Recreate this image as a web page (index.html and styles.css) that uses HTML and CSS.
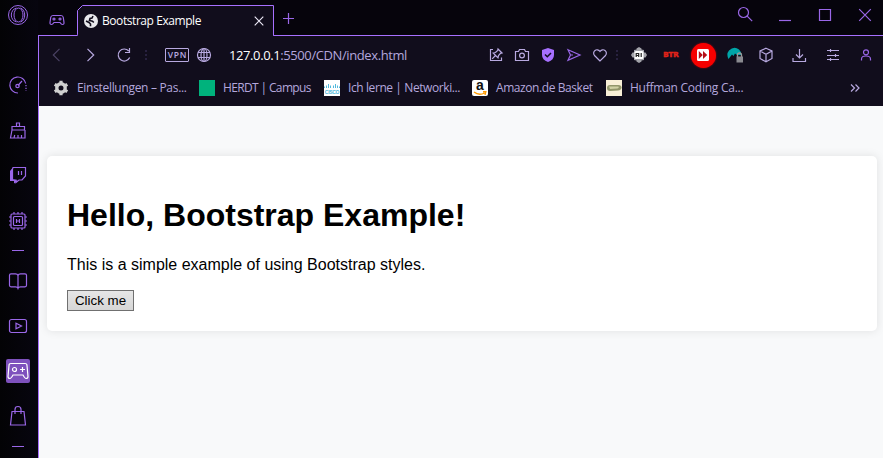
FILE: index.html
```html
<!DOCTYPE html>
<html lang="en">
<head>
<meta charset="utf-8">
<title>Bootstrap Example</title>
<link rel="stylesheet" href="styles.css">
</head>
<body>
<div class="browser">
  <aside class="sidebar">
    <svg class="ic opera" width="22" height="22" viewBox="0 0 22 22"><circle cx="11" cy="11" r="9.500"/><ellipse cx="11.500" cy="11" rx="4.500" ry="7"/><path d="M9.500 4C6 4.800 4.300 8 4.300 11s1.700 6.200 5.200 7M13.500 4c3 1 4.200 4 4.200 7s-1.200 6-4.200 7"/></svg>
    <span></span>
    <svg class="ic" width="20" height="20" viewBox="0 0 20 20"><path d="M10 18a8 8 0 1 1 7.700-9.500M10 10.500l4-4.500"/><circle cx="9.500" cy="11" r="1.700"/><path d="M18 10v6" stroke-dasharray="1.200 1.500"/></svg>
    <svg class="ic" width="20" height="20" viewBox="0 0 20 20"><path d="M8.500 5.500V2h3v3.500M4 5.500h12.500V9H4zM4 9L2.500 17H17V9M6 17l.7-3M10 17v-3M13.500 17v-3"/></svg>
    <svg class="ic" width="20" height="20" viewBox="0 0 20 20"><path d="M5 2.500h12.500v8.500l-3.500 4h-3L8 17.500V15H4.500V4z"/><path class="solid" d="M4.500 3L2 6v10h4v2.500L10 16l-4-1.500H4.500z"/><path d="M10.500 6v4M13.500 6v4"/></svg>
    <svg class="ic" width="20" height="20" viewBox="0 0 20 20"><rect x="3" y="3" width="14" height="14" rx="1"/><rect x="5.500" y="5.500" width="9" height="9" rx="1"/><path d="M8.500 8v4M11.500 8v4M8.500 10h3M6 1v2M10 1v2M14 1v2M6 17v2M10 17v2M14 17v2M1 6h2M1 10h2M1 14h2M17 6h2M17 10h2M17 14h2"/></svg>
    <i class="dash"></i>
    <svg class="ic" width="20" height="20" viewBox="0 0 20 20"><path d="M10 4.500Q9.500 2.800 7.500 2.800H3Q1.500 2.800 1.500 4.300v10q0 1.500 1.500 1.500h4.500q2 0 2.500 1.500.5-1.500 2.500-1.500H17q1.500 0 1.500-1.500v-10q0-1.500-1.500-1.500h-4.500q-2 0-2.500 1.700v12.500"/></svg>
    <svg class="ic" width="20" height="20" viewBox="0 0 20 20"><rect x="1.500" y="3.500" width="17" height="13" rx="2"/><path d="M8 7.200v5.600l5.500-2.800z"/></svg>
    <svg class="ic pad" width="24" height="24" viewBox="0 0 24 24"><path d="M5 4.500h14q2 0 2 2l1 11q0 2-2 2-1 0-3-3.500H7q-2 3.500-3 3.500-2 0-2-2l1-11q0-2 2-2z"/><circle cx="8.500" cy="10.500" r="2"/><path d="M16.500 8v5M14 10.500h5"/></svg>
    <svg class="ic" width="20" height="22" viewBox="0 0 20 22"><path d="M4 6.500h12l1.500 13.500h-15zM7 9V4.500Q7 1.500 10 1.500t3 3V9"/></svg>
    <i class="dash"></i>
  </aside>

  <div class="main">
    <header class="tabs">
      <svg class="ic gx" width="16" height="12" viewBox="0 0 16 12"><path d="M4 1.500h8q2 0 2.300 2l.7 5q.2 2-1.500 2-1.200 0-2.500-2H5q-1.300 2-2.500 2-1.700 0-1.500-2l.7-5q.3-2 2.300-2z"/><circle cx="5" cy="5" r="1"/><circle cx="11" cy="5" r="1"/></svg>
      <div class="tab">
        <svg class="outline" width="198" height="31" viewBox="0 0 198 31"><path d="M0 30.500L.5 29V5.500L5.500.5h191V30.500"/><path class="cover" d="M1 31v-1h195v1z"/></svg>
        <svg class="world" width="14" height="14" viewBox="0 0 14 14"><circle cx="7" cy="7" r="7" fill="#e9e9ed"/><path d="M9 2L8 4 6 4.500 5.500 6.500 8.500 7.200 9.800 8.500M2 7l3 1.500 1.500 1.500V12.300" fill="none" stroke="#110d1c" stroke-width="1.600"/></svg>
        <span class="title">Bootstrap Example</span>
        <svg class="close" width="10" height="10" viewBox="0 0 10 10"><path d="M.7.700l8.600 8.600M9.300.700L.7 9.300"/></svg>
      </div>
      <svg class="ic plus" width="12" height="12" viewBox="0 0 12 12"><path d="M6.500 1v11M1 6.500h11"/></svg>
      <div class="controls">
        <svg class="ic" width="16" height="16" viewBox="0 0 16 16"><circle cx="6.500" cy="6.500" r="5"/><path d="M10.200 10.200l5 5"/></svg>
        <svg class="ic" width="12" height="12" viewBox="0 0 12 12"><path d="M0 11.500h12"/></svg>
        <svg class="ic" width="12" height="12" viewBox="0 0 12 12"><path d="M.5.500h11v11H.5z"/></svg>
        <svg class="ic" width="12" height="12" viewBox="0 0 12 12"><path d="M.2.200l11.600 11.600M11.800.200L.2 11.800"/></svg>
      </div>
    </header>

    <nav class="toolbar">
      <svg class="ic dim" width="14" height="14" viewBox="0 0 14 14"><path d="M10.500 .8L4.300 7l6.200 6.200"/></svg>
      <svg class="ic pale" width="14" height="14" viewBox="0 0 14 14"><path d="M4.500 .8L10.700 7 4.500 13.200"/></svg>
      <svg class="ic pale" width="16" height="16" viewBox="0 0 16 16"><path d="M13.700 10.500a6 6 0 1 1-1-6.500M13.500 1v4.500H9"/></svg>
      <svg class="dots" width="4" height="12" viewBox="0 0 4 12"><path d="M1 1h2v2H1zM1 5h2v2H1zM1 9h2v2H1z"/></svg>
      <span class="vpn">VPN</span>
      <svg class="ic pale" width="16" height="16" viewBox="0 0 16 16"><circle cx="8" cy="8" r="6.500"/><ellipse cx="8" cy="8" rx="3" ry="6.500"/><path d="M8 1.500v13M2 5.500h12M2 10.500h12"/></svg>
      <span class="url"><b>127.0.0.1</b>:5500/CDN/index.html</span>
      <svg class="ic pale" width="14" height="14" viewBox="0 0 14 14"><path d="M4 1.500H1.500v11h11V9.500M9 1l4 4-1.500.3-2 2.200L9 9.800 4.200 5l2.300-.5 2.200-2zM6.500 7.500l-3.300 3.300"/></svg>
      <svg class="ic pale" width="16" height="14" viewBox="0 0 16 14"><path d="M1.500 3.500h3l1-2h5l1 2h3v9h-13z"/><circle cx="8" cy="7.500" r="2.400"/></svg>
      <svg width="14" height="14" viewBox="0 0 14 14"><path fill="#a770ff" d="M7 0l6 2v5q0 5-6 7-6-2-6-7V2z"/><path fill="none" stroke="#110d20" stroke-width="1.500" d="M4 6.500l2.300 2.300L10 5"/></svg>
      <svg class="ic" width="14" height="14" viewBox="0 0 14 14"><path d="M1 1.800L13 7 1 12.200 3.500 7zM3.500 7H6"/></svg>
      <svg class="ic pale" width="16" height="16" viewBox="0 0 16 16"><path d="M8 14L2.500 8.500C-.5 4.500 5 .3 8 4.500c3-4.200 8.500 0 5.500 4z"/></svg>
      <svg class="dots" width="4" height="12" viewBox="0 0 4 12"><path d="M1 1h2v2H1zM1 5h2v2H1zM1 9h2v2H1z"/></svg>
      <svg width="16" height="16" viewBox="0 0 16 16"><path fill="#a3a3aa" d="M5.500 1.500L8 0l2.500 1.500v1L13 3v2.500h1.500L16 8l-1.500 2.500H13V13l-2.500.5v1L8 16l-2.500-1.500v-1L3 13v-2.500H1.500L0 8l1.500-2.500H3V3l2.500-.5z"/><rect x="3.500" y="4" width="9" height="8" rx="1.500" fill="#fff"/><path fill="none" stroke="#222" stroke-width="1.200" d="M5.200 10V6.500h2.500V10M5.200 8.500h2.500M10.200 6v4"/></svg>
      <span class="btr">BTR</span>
      <span class="record"><svg width="12" height="12" viewBox="0 0 12 12"><rect width="12" height="12" rx="1.500" fill="#fff"/><path d="M1.800 2l4 4-4 4zM6 2l4.200 4L6 10z" fill="#b51018"/></svg></span>
      <svg width="16" height="16" viewBox="0 0 16 16"><path fill="#00a5a8" d="M1.500 12Q-1 7 2 3.500 7-1.500 12 2.500q2 1.500 2.300 5.500H10L8 6.500 6.500 9 5 7.500z"/><path d="M10.500 10V8q0-2 2-2t2 2v2" fill="none" stroke="#999" stroke-width="1.300"/><rect x="9.500" y="9.500" width="6.500" height="6" fill="#8a8a90"/></svg>
      <svg class="ic pale" width="16" height="16" viewBox="0 0 16 16"><path d="M8 1.200l6 2.800v7.500l-6 3.300-6-3.300V4zM2 4l6 3.200L14 4M8 7.200v7.500"/></svg>
      <svg class="ic pale" width="14" height="14" viewBox="0 0 14 14"><path d="M7.500 1v9M4 6.500L7.500 10 11 6.500M1 10v3.500h12.500V10"/></svg>
      <svg class="ic pale" width="14" height="12" viewBox="0 0 14 12"><path d="M1 1.500h12M1 6.500h12M1 10.500h12M4.500 0v3M9.500 5v3M4.500 9v3"/></svg>
      <svg class="ic" width="12" height="14" viewBox="0 0 12 14"><circle cx="6" cy="4.300" r="2.500"/><path d="M1.500 12.500V11q0-3 4.500-3t4.500 3v1.500"/></svg>
    </nav>

    <nav class="bookmarks">
      <a class="bm w1"><svg width="16" height="16" viewBox="0 0 16 16"><circle cx="8" cy="8" r="4.200" fill="none" stroke="#d0d0d0" stroke-width="3.400"/><path stroke="#d0d0d0" stroke-width="3.200" d="M8 .8v2.500M8 12.700v2.500M1.700 4.400l2.200 1.300M12.100 10.300l2.200 1.300M1.700 11.600l2.200-1.300M12.100 5.700l2.200-1.300"/></svg><span class="t1">Einstellungen – Pas...</span></a>
      <a class="bm w2"><i class="green"></i><span class="t2">HERDT | Campus</span></a>
      <a class="bm w3"><span class="cisco"><svg width="16" height="6" viewBox="0 0 16 6"><path d="M.5 3.500v1.500M2.500 2.500v2.500M4.500 1v4M6.500 2.500v2.500M9.500 2.500v2.500M11.500 1v4M13.500 2.500v2.500M15.500 3.500v1.500" stroke="#52b9dc"/></svg><b>CISCO</b></span><span class="t3">Ich lerne | Networki...</span></a>
      <a class="bm w4"><span class="amazon"><b>a</b><svg width="14" height="5" viewBox="0 0 14 5"><path d="M1 1q5 4 10.500 1M10 .7h2.800L12 3.800" fill="none" stroke="#ff9900" stroke-width="1.400"/></svg></span><span class="t4">Amazon.de Basket</span></a>
      <a class="bm w5"><svg width="16" height="16" viewBox="0 0 16 16"><rect width="16" height="16" fill="#f8efd6"/><path d="M1 8q0-3 3-3h8.500Q15.500 5 15.500 7.500T12 10.500L4 11Q1 11 1 8z" fill="#92966a"/><path d="M3 6.500h9.500q1 1.500-1 2L4 9z" fill="#d0d1a4"/></svg><span class="t5">Huffman Coding Ca...</span></a>
      <svg class="ic pale more" width="10" height="8" viewBox="0 0 10 8"><path d="M1 .5L4.500 4 1 7.500M5.500.500L9 4 5.500 7.500"/></svg>
    </nav>

    <main class="page">
      <section class="card">
        <h1>Hello, Bootstrap Example!</h1>
        <p>This is a simple example of using Bootstrap styles.</p>
        <button>Click me</button>
      </section>
    </main>
  </div>
</div>
</body>
</html>
```
FILE: styles.css
```css
* { box-sizing: border-box; }
body { margin: 0; overflow: hidden; }
svg { display: block; flex: none; }
.browser {
  display: flex;
  width: 883px;
  height: 458px;
  background: #06040c;
  font-family: "Open Sans", "Noto Sans", sans-serif;
}
.ic { fill: none; stroke: #9a67e8; stroke-width: 1.2; overflow: visible; }
.opera { stroke-width: 1; }
.ic .solid { fill: #9a67e8; stroke: none; }
.pale { stroke: #b8a9e0; }
.dim { stroke: #4a4163; }
.dots { fill: #28213f; }

.sidebar {
  display: grid;
  grid-template-rows: 30px 32px 46px 45px 44px 48px 10px 52px 38px 52px 38px 22px;
  width: 38px;
  padding-right: 2px;
  place-items: center;
  background: linear-gradient(90deg, #030305, #07050f);
}
.dash { width: 12px; height: 1px; background: #9a67e8; }
.pad { background: #7e51bd; border-radius: 2px; stroke: #fff; }

.main { flex: 1; min-width: 0; display: flex; flex-direction: column; }
.tabs {
  display: flex;
  height: 36px;
  padding-top: 5px;
  background: linear-gradient(#a770ff, #a770ff) bottom / 100% 1px no-repeat;
}
.gx { margin: 9px 9px 0 11px; }
.tab {
  position: relative;
  display: flex;
  align-items: center;
  width: 198px;
  height: 31px;
  margin-left: 3px;
  padding: 0 11px 0 7px;
}
.outline { position: absolute; left: 0; top: 0; fill: #110d1c; stroke: #a770ff; }
.outline .cover { stroke: none; }
.world, .title, .close { position: relative; }
.title { margin-left: 4px; color: #fff; font-size: 12px; letter-spacing: -.43px; white-space: nowrap; }
.close { margin-left: auto; fill: none; stroke: #f0ecfa; stroke-width: 1.1; }
.plus { margin: 7px 0 0 7px; }
.controls {
  display: grid;
  grid-template-columns: 40px 40px 40px 40px;
  height: 20px;
  margin: 0 -2px 0 auto;
  place-items: center;
}
.controls .ic:first-child { margin-top: -2px; }

.toolbar {
  display: grid;
  grid-template-columns: 34px 34px 33px 12px 37px 30px 264px 26px 26px 26px 26px 26px 8px 36px 28px 36px 28px 34px 32px 36px 30px;
  height: 38px;
  place-items: center;
}
.toolbar, .bookmarks { background: #110d1c; border-left: 1px solid #a770ff; }
.vpn {
  justify-self: end;
  width: 24px;
  height: 14px;
  padding-left: 1px;
  border: 1px solid #b8a9e0;
  border-radius: 1px;
  color: #b8a9e0;
  font-size: 8.5px;
  font-weight: 600;
  line-height: 12px;
  letter-spacing: .7px;
  text-align: center;
}
.url { justify-self: start; padding-left: 10px; color: #b4a7dc; font-size: 13px; letter-spacing: -.4px; white-space: nowrap; }
.url b { color: #fff; font-weight: 400; }
.btr { color: #e32319; font: 900 7px/10px "DejaVu Sans", sans-serif; -webkit-text-stroke: .5px #e32319; letter-spacing: 0; }
.record {
  display: grid;
  place-items: center;
  width: 25px;
  height: 25px;
  border-radius: 50%;
  background: #f60000;
  box-shadow: 0 0 2px #c00000;
}

.bookmarks { display: flex; height: 32px; padding: 0 23px 4px 14px; align-items: center; }
.bm { display: flex; align-items: center; gap: 8px; color: #b4a7dc; font-size: 12px; white-space: nowrap; }
.bm > span:last-child { margin-top: -1px; }
.w1 { width: 146px; }
.w2 { width: 125px; }
.w3 { width: 148px; }
.w4 { width: 134px; }
.t1 { letter-spacing: -.31px; }
.t2 { letter-spacing: -.64px; }
.t3 { letter-spacing: -.41px; }
.t4 { letter-spacing: -.42px; }
.t5 { letter-spacing: -.25px; }
.green { width: 16px; height: 16px; background: #00b27c; }
.cisco, .amazon {
  display: flex;
  flex-direction: column;
  align-items: center;
  width: 16px;
  height: 16px;
  background: #fff;
}
.cisco { padding-top: 3px; }
.cisco b { color: #4ab4da; font: 700 5px/6px "Liberation Sans", sans-serif; letter-spacing: -.3px; }
.amazon { border-radius: 2px; }
.amazon b { color: #111; font: 700 14px/11px "Liberation Sans", sans-serif; }
.more { margin-left: auto; }

.page {
  flex: 1;
  padding: 50px 6px 0 8px;
  background: #f8f9fa;
  border-left: 1px solid #a770ff;
  font-family: "Liberation Sans", Arial, sans-serif;
}
.card {
  height: 175px;
  padding: 41px 20px 20px;
  border-radius: 5px;
  background: #fff;
  box-shadow: 0 0 10px rgba(0, 0, 0, .1);
  color: #000;
}
h1 { margin: 0 0 21px; font-size: 32px; line-height: 37px; }
p { margin: 0 0 16px; font-size: 16px; line-height: 19px; }
button {
  display: block;
  width: 67px;
  height: 21px;
  padding: 0;
  border: 1px solid #707070;
  border-radius: 0;
  background: linear-gradient(#e6e6e6, #d6d6d6);
  color: #000;
  font: 13.333px "Liberation Sans", Arial, sans-serif;
}
```
